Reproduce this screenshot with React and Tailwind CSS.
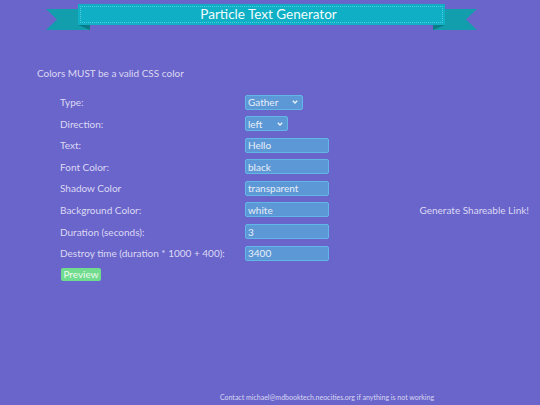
import React, { useState } from 'react';

const font = { fontFamily: 'Lato, "Open Sans", sans-serif' };

function Chevron() {
  return (
    <svg className="pointer-events-none absolute right-[5px] top-1/2 -translate-y-1/2" width="6" height="4" viewBox="0 0 6 4">
      <path d="M0.8 0.8 L3 3 L5.2 0.8" fill="none" stroke="#eef2fb" strokeWidth="1.3" />
    </svg>
  );
}

function Select({ value, options, width, onChange }) {
  return (
    <div className={`relative h-[15px] ${width}`}>
      <select
        value={value}
        onChange={(e) => onChange(e.target.value)}
        className="h-full w-full appearance-none rounded-[2px] border border-[#62b7e6] bg-[#5c98d6] pl-[2px] text-[10px] leading-none text-[#e8eef8] outline-none"
        style={font}
      >
        {options.map((o) => (
          <option key={o} value={o}>{o}</option>
        ))}
      </select>
      <Chevron />
    </div>
  );
}

function TextInput({ value, onChange }) {
  return (
    <input
      value={value}
      onChange={(e) => onChange(e.target.value)}
      className="h-[15px] w-[84px] rounded-[2px] border border-[#62b7e6] bg-[#5c98d6] px-[2px] text-[10px] leading-none text-[#e8eef8] outline-none"
      style={font}
    />
  );
}

export default function App() {
  const [form, setForm] = useState({
    type: 'Gather',
    direction: 'left',
    text: 'Hello',
    fontColor: 'black',
    shadow: 'transparent',
    bg: 'white',
    duration: '3',
    destroy: '3400',
  });
  const set = (k) => (v) => setForm((f) => ({ ...f, [k]: v }));

  const rows = [
    { label: 'Type:', el: <Select value={form.type} options={['Gather', 'Explode']} width="w-[58px]" onChange={set('type')} /> },
    { label: 'Direction:', el: <Select value={form.direction} options={['left', 'right', 'up', 'down']} width="w-[43px]" onChange={set('direction')} /> },
    { label: 'Text:', el: <TextInput value={form.text} onChange={set('text')} /> },
    { label: 'Font Color:', el: <TextInput value={form.fontColor} onChange={set('fontColor')} /> },
    { label: 'Shadow Color', el: <TextInput value={form.shadow} onChange={set('shadow')} /> },
    { label: 'Background Color:', el: <TextInput value={form.bg} onChange={set('bg')} />, link: true },
    { label: 'Duration (seconds):', el: <TextInput value={form.duration} onChange={set('duration')} /> },
    { label: 'Destroy time (duration * 1000 + 400):', el: <TextInput value={form.destroy} onChange={set('destroy')} /> },
  ];

  return (
    <div className="flex h-[405px] w-[540px] flex-col overflow-hidden bg-[#6a65cb] text-[#dcd9f3]" style={font}>
      {/* ribbon header */}
      <div className="relative h-[32px]">
        <svg className="absolute inset-0" width="540" height="32" viewBox="0 0 540 32">
          <polygon points="46,9 90,9 90,30 46,30 57,19.5" fill="#139eae" />
          <polygon points="78,25 90,25 90,30" fill="#0b7b88" />
          <polygon points="433,9 477,9 466,19.5 477,30 433,30" fill="#139eae" />
          <polygon points="433,25 445,25 433,30" fill="#0b7b88" />
        </svg>
        <div className="relative ml-[78px] mt-[4px] flex h-[21px] w-[367px] items-center justify-center bg-[#0fb0c5] p-[2px]">
          <div className="flex h-full w-full items-center justify-center border border-dotted border-[#52cbdb] pl-[14px]">
            <span className="text-[13.5px] leading-none text-[#f2fbfd]">Particle Text Generator</span>
          </div>
        </div>
      </div>

      <p className="ml-[37px] mt-[35px] text-[10px] leading-[12px]">Colors MUST be a valid CSS color</p>

      <div className="mt-[15.5px] grid grid-cols-[185px_84px_1fr] items-center gap-y-[6.6px] pl-[60px] pr-[11px] text-[10px] leading-none">
        {rows.map((r) => (
          <React.Fragment key={r.label}>
            <span>{r.label}</span>
            <div className="flex">{r.el}</div>
            <span className="text-right">{r.link ? 'Generate Shareable Link!' : ''}</span>
          </React.Fragment>
        ))}
      </div>

      <div className="ml-[61px] mt-[7px] flex">
        <button className="h-[13px] w-[40px] rounded-[2px] bg-[#70dc8d] text-[10px] leading-none text-[#eefaf1]" style={font}>
          Preview
        </button>
      </div>

      <p className="mt-auto mb-[3px] pl-[114px] text-center text-[7px] leading-[9px] text-[#d8d6f2]">
        Contact michael@mdbooktech.neocities.org if anything is not working
      </p>
    </div>
  );
}
